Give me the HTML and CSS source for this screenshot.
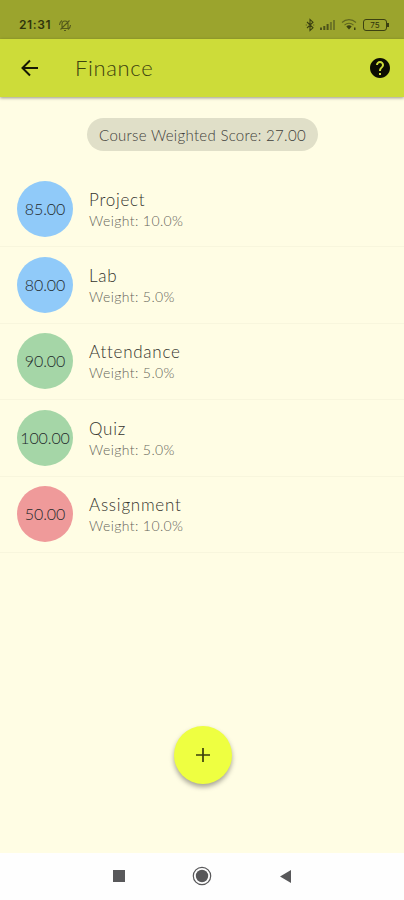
FILE: index.html
```html
<!DOCTYPE html>
<html lang="en">
<head>
    <meta charset="UTF-8">
    <meta name="viewport" content="width=device-width, initial-scale=1.0">
    <title>Finance</title>
    <link rel="stylesheet" href="styles.css">
</head>
<body>
    <div class="screen">
        <div class="status-bar">
            <span class="clock">21:31</span>
            <svg class="mute" width="14" height="14" viewBox="0 0 14 14">
                <path d="M4 10.500V6a3 3 0 0 1 6 0v4.500M3 10.500h8M6 12.500h2M2.500 11.500l9-9M1.500 7a5.500 5.500 0 0 1 2.500-4.500M12.500 7a5.500 5.500 0 0 1-2.500 4.500"/>
            </svg>
            <svg class="bluetooth" width="10" height="14" viewBox="0 0 10 14">
                <path d="M2 4l6 5.800L5 12.500v-11L8 4.200 2 10M.8 7h.8M8.400 7h.8"/>
            </svg>
            <svg class="signal" width="16" height="11" viewBox="0 0 16 11">
                <path d="M0 8.500h2V11H0zM3.300 7h2v4h-2zM6.600 5h2v6h-2z"/>
                <path class="dim" d="M9.900 3h2v8h-2zM13 1h2v10h-2z"/>
            </svg>
            <svg class="wifi" width="16" height="13" viewBox="0 0 16 13">
                <path class="arcs" d="M1 4.500a10 10 0 0 1 14 0M3.500 7.200a6.300 6.300 0 0 1 9 0"/>
                <path class="fill" d="M5.300 8.600a3.800 3.800 0 0 1 5.400 0L8 11.500zM13 9.500h1.500V12H13z"/>
            </svg>
            <span class="battery">75</span>
        </div>

        <header class="app-bar">
            <svg class="back" width="24" height="24" viewBox="0 0 24 24">
                <path d="M20 12H5M12 4.500L4.500 12l7.500 7.500"/>
            </svg>
            <h1>Finance</h1>
            <svg class="help" width="24" height="24" viewBox="0 0 24 24">
                <path d="M12 2C6.480 2 2 6.480 2 12s4.480 10 10 10 10-4.480 10-10S17.520 2 12 2zm1 17h-2v-2h2v2zm2.070-7.750l-.9.920C13.450 12.900 13 13.500 13 15h-2v-.5c0-1.100.45-2.100 1.170-2.830l1.240-1.260c.37-.36.59-.86.59-1.410 0-1.100-.9-2-2-2s-2 .9-2 2H8c0-2.210 1.790-4 4-4s4 1.790 4 4c0 .88-.36 1.680-.93 2.250z"/>
            </svg>
        </header>

        <main>
            <div class="score">Course Weighted Score: 27.00</div>

            <ul class="list">
                <li>
                    <span class="grade blue">85.00</span>
                    <div class="info">
                        <span class="name">Project</span>
                        <span class="weight">Weight: 10.0%</span>
                    </div>
                </li>
                <li>
                    <span class="grade blue">80.00</span>
                    <div class="info">
                        <span class="name">Lab</span>
                        <span class="weight">Weight: 5.0%</span>
                    </div>
                </li>
                <li>
                    <span class="grade green">90.00</span>
                    <div class="info">
                        <span class="name">Attendance</span>
                        <span class="weight">Weight: 5.0%</span>
                    </div>
                </li>
                <li>
                    <span class="grade green">100.00</span>
                    <div class="info">
                        <span class="name">Quiz</span>
                        <span class="weight">Weight: 5.0%</span>
                    </div>
                </li>
                <li>
                    <span class="grade red">50.00</span>
                    <div class="info">
                        <span class="name">Assignment</span>
                        <span class="weight">Weight: 10.0%</span>
                    </div>
                </li>
            </ul>

            <button class="add" aria-label="Add">
                <svg width="16" height="16" viewBox="0 0 16 16">
                    <path d="M8 1v14M1 8h14"/>
                </svg>
            </button>
        </main>

        <nav class="nav-bar">
            <svg width="20" height="20" viewBox="0 0 20 20">
                <path d="M4 4h12v12H4z"/>
            </svg>
            <svg width="20" height="20" viewBox="0 0 20 20">
                <circle class="ring" cx="10" cy="10" r="8.700"/>
                <circle cx="10" cy="10" r="6.200"/>
            </svg>
            <svg width="20" height="20" viewBox="0 0 20 20">
                <path d="M15 4v13L4 10.500z"/>
            </svg>
        </nav>
    </div>
</body>
</html>
```

FILE: styles.css
```css
* {
    box-sizing: border-box;
}

body {
    margin: 0;
    font-family: Lato, sans-serif;
    font-weight: 300;
    background-color: #fffde4;
    color: #40403a;
}

.screen {
    display: flex;
    flex-direction: column;
    height: 900px;
}

/* status bar */
.status-bar {
    display: flex;
    align-items: center;
    height: 39px;
    padding: 10px 15px 0 19px;
    background-color: #9ba42d;
    color: #30340c;
}

.status-bar svg {
    fill: none;
    stroke: #3c4111;
    stroke-width: 1.1;
}

.status-bar .mute {
    margin-left: 5px;
    stroke: #545a1b;
}

.clock {
    width: 34px;
    font-family: Inter, sans-serif;
    font-size: 12px;
    font-weight: 600;
    letter-spacing: 0.6px;
}

.bluetooth {
    margin-left: auto;
}

.status-bar .signal {
    margin-left: 5px;
    fill: #4c521a;
    stroke: none;
}

.signal .dim {
    fill: #6d7526;
}

.wifi {
    margin-left: 5px;
}

.wifi .arcs {
    stroke: #60671f;
}

.wifi .fill {
    fill: #3c4111;
    stroke: none;
}

.battery {
    position: relative;
    width: 24px;
    height: 12px;
    margin: 0 2px 0 6px;
    border: 1.5px solid #3c4111;
    border-radius: 3px;
    font-family: Inter, sans-serif;
    font-size: 8px;
    font-weight: 400;
    line-height: 10px;
    text-align: center;
}

.battery::after {
    content: "";
    position: absolute;
    top: 3px;
    right: -3px;
    width: 2px;
    height: 4px;
    background-color: #3c4111;
}

/* app bar */
.app-bar {
    display: flex;
    align-items: center;
    height: 58px;
    padding: 0 12px 0 18px;
    background-color: #cddc39;
    box-shadow: 0 1px 3px rgba(0, 0, 0, 0.4);
}

.back {
    fill: none;
    stroke: #161805;
    stroke-width: 2;
}

.app-bar h1 {
    margin: 0 auto 1px 33px;
    font-size: 22px;
    font-weight: 300;
    letter-spacing: 0.65px;
    color: #3d430f;
}

.help {
    fill: #0c0d02;
}

main {
    display: flex;
    flex: 1;
    flex-direction: column;
    align-items: center;
    padding-top: 21px;
}

.score {
    width: 231px;
    height: 33px;
    margin-left: 1px;
    border-radius: 17px;
    background-color: #e0dfc8;
    font-size: 15px;
    line-height: 34px;
    letter-spacing: 0.3px;
    text-align: center;
    white-space: nowrap;
}

.list {
    display: grid;
    grid-template-rows: repeat(5, 76.4px);
    width: 100%;
    margin: 20px 0 0;
    padding: 0;
    list-style: none;
}

.list li {
    display: flex;
    align-items: center;
    gap: 16px;
    padding-left: 17px;
    border-bottom: 1px solid #f8f6dd;
}

.grade {
    width: 56px;
    height: 56px;
    border-radius: 50%;
    color: #1f292b;
    font-size: 16px;
    line-height: 56px;
    letter-spacing: -0.1px;
    text-align: center;
}

.blue {
    background-color: #90caf9;
}

.green {
    background-color: #a5d6a7;
}

.red {
    background-color: #ef9a9a;
}

.info {
    display: flex;
    flex-direction: column;
    padding-top: 2px;
}

.name {
    font-size: 17px;
    line-height: 22px;
    letter-spacing: 0.75px;
    color: #33332d;
}

.weight {
    font-size: 14px;
    line-height: 20px;
    letter-spacing: 0.4px;
    color: #66655a;
}

.add {
    display: flex;
    align-items: center;
    justify-content: center;
    width: 58px;
    height: 58px;
    margin: 173px 0 0 1px;
    padding: 0;
    border: none;
    border-radius: 50%;
    background-color: #eeff41;
    box-shadow: 0 3px 5px rgba(0, 0, 0, 0.35);
}

.add svg {
    fill: none;
    stroke: #3a3f0c;
    stroke-width: 1.7;
}

/* system navigation */
.nav-bar {
    display: flex;
    align-items: center;
    justify-content: center;
    gap: 63.5px;
    height: 47px;
    padding-bottom: 1px;
    background-color: #fefefe;
}

.nav-bar svg {
    fill: #58585a;
}

.nav-bar .ring {
    fill: none;
    stroke: #58585a;
    stroke-width: 1.2;
}
```
